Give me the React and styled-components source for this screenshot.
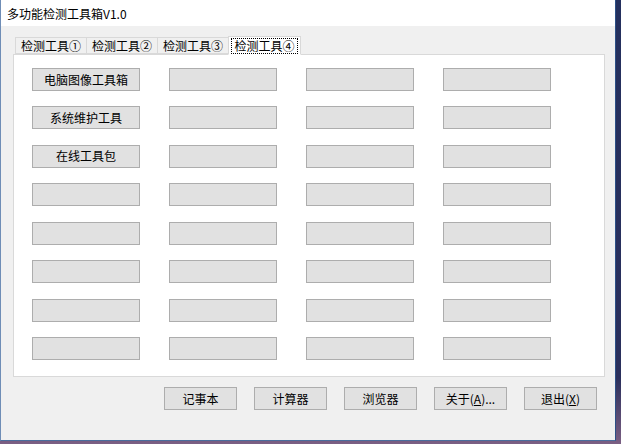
import React from 'react'
import styled, { createGlobalStyle } from 'styled-components'

const Global = createGlobalStyle`
    html, body {
        margin: 0;
        padding: 0;
        width: 621px;
        height: 444px;
        overflow: hidden;
        background: linear-gradient(180deg, #24305e 0%, #2a2f5c 85%, #7b5f83 100%);
    }
    * {
        box-sizing: border-box;
    }
`

const Window = styled.div`
    width: 616px;
    height: 441px;
    display: flex;
    flex-direction: column;
    background: #f0f0f0;
    border-left: 1px solid #6f8db6;
    border-right: 1px solid #2b4f86;
    border-bottom: 1px solid #4a6c9c;
    font-family: "Noto Sans CJK SC", "Noto Sans", sans-serif;
    font-size: 12px;
    color: #000;
`

const TitleBar = styled.div`
    height: 26px;
    flex: none;
    background: #fff;
    display: flex;
    align-items: center;
    padding-left: 6px;
    font-size: 12px;
`

const Client = styled.div`
    flex: 1;
    padding: 9px 0 0 12px;
    display: flex;
    flex-direction: column;
`

const TabStrip = styled.div`
    height: 19px;
    display: flex;
    align-items: flex-end;
    padding-left: 2px;
    position: relative;
    z-index: 1;
`

const Tab = styled.div`
    height: ${p => (p.$active ? '19px' : '17px')};
    width: ${p => (p.$active ? '73px' : '72px')};
    margin-left: ${p => (p.$first ? '0' : '-1px')};
    background: ${p => (p.$active ? '#fff' : '#f0f0f0')};
    border: 1px solid #d9d9d9;
    border-bottom: ${p => (p.$active ? '1px solid #fff' : '1px solid #d9d9d9')};
    display: flex;
    align-items: center;
    justify-content: center;
    line-height: 1;
    padding-top: 1px;
    margin-bottom: ${p => (p.$active ? '-1px' : '0')};
    span {
        padding: 1px 2px;
        border: 1px dotted ${p => (p.$active ? '#000' : 'transparent')};
    }
`

const Panel = styled.div`
    width: 592px;
    height: 323px;
    background: #fff;
    border: 1px solid #d9d9d9;
    padding: 13px 0 0 18px;
`

const Grid = styled.div`
    display: grid;
    grid-template-columns: repeat(4, 108px);
    grid-auto-rows: 23px;
    column-gap: 29px;
    row-gap: 15.43px;
`

const Button = styled.div`
    background: #e1e1e1;
    border: 1px solid #adadad;
    display: flex;
    align-items: center;
    justify-content: center;
    font-size: 12px;
    line-height: 1;
    width: ${p => p.$w || '100%'};
    height: 23px;
    u {
        text-decoration: underline;
    }
`

const BottomBar = styled.div`
    display: flex;
    gap: 17px;
    margin-top: 10px;
    padding-left: 151px;
`

const tools = ['电脑图像工具箱', '系统维护工具', '在线工具包']

export default function App() {
    const cells = []
    for (let r = 0; r < 8; r++) {
        for (let c = 0; c < 4; c++) {
            cells.push(<Button key={r + '-' + c}>{c === 0 && tools[r] ? tools[r] : ''}</Button>)
        }
    }

    return (
        <>
            <Global />
            <Window>
                <TitleBar>多功能检测工具箱V1.0</TitleBar>
                <Client>
                    <TabStrip>
                        <Tab $first><span>检测工具①</span></Tab>
                        <Tab><span>检测工具②</span></Tab>
                        <Tab><span>检测工具③</span></Tab>
                        <Tab $active><span>检测工具④</span></Tab>
                    </TabStrip>
                    <Panel>
                        <Grid>{cells}</Grid>
                    </Panel>
                    <BottomBar>
                        <Button $w="73px">记事本</Button>
                        <Button $w="73px">计算器</Button>
                        <Button $w="73px">浏览器</Button>
                        <Button $w="73px">关于(<u>A</u>)...</Button>
                        <Button $w="73px">退出(<u>X</u>)</Button>
                    </BottomBar>
                </Client>
            </Window>
        </>
    )
}
